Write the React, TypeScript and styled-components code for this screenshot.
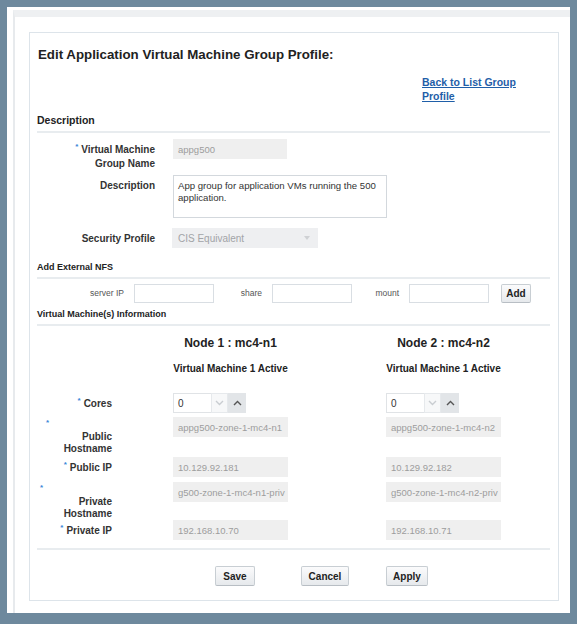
import React, { FC, ReactNode } from 'react'
import styled, { createGlobalStyle } from 'styled-components'

const GlobalStyle = createGlobalStyle`
  html, body {
    margin: 0;
    padding: 0;
  }
  body {
    background: #6e899d;
    font-family: "Liberation Sans", Arial, sans-serif;
    color: #333;
  }
  * {
    box-sizing: border-box;
  }
`

const Frame = styled.div`
  margin: 7px 7px 0 7px;
  height: 606px;
  background: #fff;
  padding: 3px 0 0 6px;
  display: flex;
`

const Page = styled.div`
  flex: 1;
  border-top: 7px solid #eef0f2;
  border-left: 2px solid #e7eaed;
  padding: 15px 11px 0 14px;
`

const Card = styled.div`
  border: 1px solid #dde4ea;
  height: 569px;
  padding: 14px 8px 0 7px;
`

const Title = styled.h1`
  margin: 0 0 0 1px;
  font-size: 13.3px;
  line-height: 16px;
  font-weight: bold;
  color: #222;
`

const LinkRow = styled.div`
  margin-top: 12px;
  padding-left: 385px;
`

const BackLink = styled.a`
  display: inline-block;
  width: 100px;
  font-size: 10.5px;
  line-height: 14px;
  font-weight: bold;
  color: #1f5ea8;
  text-decoration: underline;
`

const SectionTitle = styled.div<{ $size: number; $top: number; $bottom: number }>`
  margin-top: ${p => p.$top}px;
  padding-bottom: ${p => p.$bottom}px;
  font-size: ${p => p.$size}px;
  line-height: ${p => p.$size + 1.5}px;
  font-weight: bold;
  color: #222;
  border-bottom: 2px solid #e8ecef;
`

const FormRow = styled.div<{ $top: number }>`
  display: grid;
  grid-template-columns: 118px auto;
  column-gap: 18px;
  align-items: start;
  margin-top: ${p => p.$top}px;
`

const FormLabel = styled.div`
  padding: 4px 0 0 28px;
  text-align: right;
  font-size: 10px;
  line-height: 14px;
  font-weight: bold;
  color: #333;
`

const Req = styled.span`
  color: #3a86d8;
  font-size: 8px;
  line-height: 8px;
  vertical-align: top;
  margin-right: 3px;
`

const ReqLine = styled.div<{ $left: number }>`
  height: 14px;
  padding-left: ${p => p.$left}px;
  text-align: left;
  color: #3a86d8;
  font-size: 8px;
  line-height: 12px;
`

const Field = styled.div<{ $width: number }>`
  width: ${p => p.$width}px;
  height: 20px;
  background: #efefef;
  color: #9d9d9d;
  font-size: 9.5px;
  padding: 0 2px 0 5px;
  display: flex;
  align-items: center;
  overflow: hidden;
  white-space: nowrap;
`

const TextArea = styled.textarea`
  width: 214px;
  height: 43px;
  border: 1px solid #d3d8dd;
  padding: 4px 3px 4px 4px;
  margin: 0;
  resize: none;
  font-family: "Liberation Sans", Arial, sans-serif;
  font-size: 9.6px;
  line-height: 12px;
  color: #333;
  display: block;
  overflow: hidden;
`

const SelectBox = styled.div`
  width: 146px;
  height: 20px;
  margin-left: -1px;
  background: #eeeff1;
  color: #a2a4a7;
  font-size: 10px;
  padding: 0 8px 0 6px;
  display: flex;
  align-items: center;
  justify-content: space-between;
`

const Caret = styled.span`
  width: 0;
  height: 0;
  border-left: 3.5px solid transparent;
  border-right: 3.5px solid transparent;
  border-top: 4px solid #cfd1d4;
`

const NfsRow = styled.div`
  display: flex;
  align-items: center;
  margin-top: 5px;
`

const NfsLabel = styled.span<{ $width: number }>`
  width: ${p => p.$width}px;
  margin-right: 10px;
  text-align: right;
  font-size: 8.5px;
  color: #555;
`

const TextBox = styled.div`
  width: 80px;
  height: 19px;
  border: 1px solid #d9dee3;
  background: #fff;
`

const Button = styled.button<{ $width: number; $left?: number }>`
  width: ${p => p.$width}px;
  height: ${p => (p.$left === undefined ? 19 : 20)}px;
  margin: 0 0 0 ${p => p.$left ?? 12}px;
  padding: 0;
  border: 1px solid #c8ced3;
  border-bottom-color: #b8bec4;
  border-radius: 2px;
  background: linear-gradient(#fbfbfc, #e6e9ec);
  font-family: "Liberation Sans", Arial, sans-serif;
  font-size: 10px;
  font-weight: bold;
  color: #222;
`

const VmRow = styled.div<{ $top: number }>`
  display: grid;
  grid-template-columns: 136px 115px 98px 115px;
  align-items: start;
  margin-top: ${p => p.$top}px;
`

const NodeHeading = styled.div<{ $size: number }>`
  justify-self: center;
  white-space: nowrap;
  font-size: ${p => p.$size}px;
  line-height: ${p => p.$size + 3}px;
  font-weight: bold;
  color: #222;
`

const VmLabel = styled.div<{ $pad: number }>`
  padding: ${p => p.$pad}px 61px 0 0;
  text-align: right;
  font-size: 10px;
  line-height: ${p => (p.$pad ? 13 : 12)}px;
  font-weight: bold;
  color: #333;
`

const Spinner = styled.div`
  display: flex;
  width: 73px;
  height: 20px;
`

const SpinValue = styled.div`
  width: 38px;
  border: 1px solid #e0e3e6;
  border-right: none;
  background: #fff;
  font-size: 10px;
  color: #333;
  padding-left: 4px;
  display: flex;
  align-items: center;
`

const SpinButton = styled.div<{ $active?: boolean }>`
  width: ${p => (p.$active ? 18 : 17)}px;
  background: ${p => (p.$active ? '#e2e5e8' : '#f7f8f9')};
  border: 1px solid ${p => (p.$active ? '#e2e5e8' : '#e6e9ec')};
  display: flex;
  align-items: center;
  justify-content: center;
`

const Divider = styled.div`
  margin-top: 8px;
  height: 2px;
  background: #e8ecef;
`

const ButtonRow = styled.div`
  display: flex;
  margin-top: 16px;
  padding-left: 178px;
`

const Chevron: FC<{ up?: boolean; color: string }> = ({ up, color }) => (
  <svg width="9" height="6" viewBox="0 0 9 6">
    <polyline
      points={up ? '1,5 4.5,1.5 8,5' : '1,1 4.5,4.5 8,1'}
      fill="none"
      stroke={color}
      strokeWidth="1.4"
    />
  </svg>
)

type Node = {
  name: string
  host: string
  publicIp: string
  privHost: string
  privateIp: string
}

const nodes: Node[] = [
  { name: 'Node 1 : mc4-n1', host: 'appg500-zone-1-mc4-n1', publicIp: '10.129.92.181', privHost: 'g500-zone-1-mc4-n1-priv', privateIp: '192.168.10.70' },
  { name: 'Node 2 : mc4-n2', host: 'appg500-zone-1-mc4-n2', publicIp: '10.129.92.182', privHost: 'g500-zone-1-mc4-n2-priv', privateIp: '192.168.10.71' },
]

const NodeCells: FC<{ render: (n: Node) => ReactNode }> = ({ render }) => (
  <>
    <div>{render(nodes[0])}</div>
    <div />
    <div>{render(nodes[1])}</div>
  </>
)

const App: FC = () => {
  return (
    <>
      <GlobalStyle />
      <Frame>
        <Page>
          <Card>
            <Title>Edit Application Virtual Machine Group Profile:</Title>
            <LinkRow>
              <BackLink href="#">Back to List Group Profile</BackLink>
            </LinkRow>

            <SectionTitle $size={10.5} $top={10} $bottom={5}>Description</SectionTitle>
            <FormRow $top={6}>
              <FormLabel><Req>*</Req>Virtual Machine Group Name</FormLabel>
              <Field $width={114}>appg500</Field>
            </FormRow>
            <FormRow $top={4}>
              <FormLabel>Description</FormLabel>
              <TextArea readOnly defaultValue="App group for application VMs running the 500 application." />
            </FormRow>
            <FormRow $top={10}>
              <FormLabel>Security Profile</FormLabel>
              <SelectBox>
                CIS Equivalent
                <Caret />
              </SelectBox>
            </FormRow>

            <SectionTitle $size={9} $top={14} $bottom={4}>Add External NFS</SectionTitle>
            <NfsRow>
              <NfsLabel $width={87}>server IP</NfsLabel>
              <TextBox />
              <NfsLabel $width={48}>share</NfsLabel>
              <TextBox />
              <NfsLabel $width={47}>mount</NfsLabel>
              <TextBox />
              <Button $width={30}>Add</Button>
            </NfsRow>

            <SectionTitle $size={9} $top={6} $bottom={5}>Virtual Machine(s) Information</SectionTitle>
            <VmRow $top={10}>
              <div />
              <NodeHeading $size={12}>{nodes[0].name}</NodeHeading>
              <div />
              <NodeHeading $size={12}>{nodes[1].name}</NodeHeading>
            </VmRow>
            <VmRow $top={11}>
              <div />
              <NodeHeading $size={10}>Virtual Machine 1 Active</NodeHeading>
              <div />
              <NodeHeading $size={10}>Virtual Machine 1 Active</NodeHeading>
            </VmRow>

            <VmRow $top={18}>
              <VmLabel $pad={4}><Req>*</Req>Cores</VmLabel>
              <NodeCells
                render={() => (
                  <Spinner>
                    <SpinValue>0</SpinValue>
                    <SpinButton><Chevron color="#c9cdd1" /></SpinButton>
                    <SpinButton $active><Chevron up color="#555" /></SpinButton>
                  </Spinner>
                )}
              />
            </VmRow>
            <VmRow $top={4}>
              <VmLabel $pad={0}>
                <ReqLine $left={9}>*</ReqLine>
                Public Hostname
              </VmLabel>
              <NodeCells render={n => <Field $width={115}>{n.host}</Field>} />
            </VmRow>
            <VmRow $top={2}>
              <VmLabel $pad={4}><Req>*</Req>Public IP</VmLabel>
              <NodeCells render={n => <Field $width={115}>{n.publicIp}</Field>} />
            </VmRow>
            <VmRow $top={5}>
              <VmLabel $pad={0}>
                <ReqLine $left={3}>*</ReqLine>
                Private Hostname
              </VmLabel>
              <NodeCells render={n => <Field $width={115}>{n.privHost}</Field>} />
            </VmRow>
            <VmRow $top={0}>
              <VmLabel $pad={4}><Req>*</Req>Private IP</VmLabel>
              <NodeCells render={n => <Field $width={115}>{n.privateIp}</Field>} />
            </VmRow>

            <Divider />
            <ButtonRow>
              <Button $width={40} $left={0}>Save</Button>
              <Button $width={48} $left={46}>Cancel</Button>
              <Button $width={42} $left={37}>Apply</Button>
            </ButtonRow>
          </Card>
        </Page>
      </Frame>
    </>
  )
}

export default App
